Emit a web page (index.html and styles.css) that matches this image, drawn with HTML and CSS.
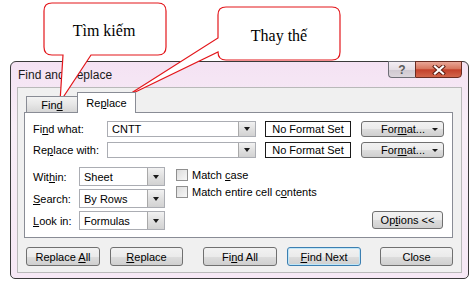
FILE: index.html
```html
<!DOCTYPE html>
<html lang="vi">
  <head>
    <meta charset="UTF-8">
    <title>Find and Replace</title>
    <link rel="stylesheet" href="styles.css">
  </head>
  <body>
    <!-- hộp thoại Find and Replace -->
    <div class="dialog">
      <div class="titlebar">
        <span class="title">Find and Replace</span>
        <div class="caption-buttons">
          <span class="cap-btn help">?</span>
          <span class="cap-btn close">
            <svg width="14" height="10" viewBox="0 0 14 10">
              <path d="M3 1.5 L11 8.5 M11 1.5 L3 8.5" stroke="#5a1a10" stroke-width="4" stroke-linecap="square"/>
              <path d="M3 1.5 L11 8.5 M11 1.5 L3 8.5" stroke="#ffffff" stroke-width="2.2" stroke-linecap="square"/>
            </svg>
          </span>
        </div>
      </div>

      <div class="client">
        <div class="tabs">
          <div class="tab"><span>Fin<u>d</u></span></div>
          <div class="tab active"><span>Re<u>p</u>lace</span></div>
        </div>

        <div class="panel">
          <div class="field-row">
            <span class="label">Fi<u>n</u>d what:</span>
            <div class="combo wide"><span class="combo-text">CNTT</span><span class="drop"><i class="tri"></i></span></div>
            <div class="format-box">No Format Set</div>
            <div class="btn format-btn"><span>For<u>m</u>at...</span><i class="tri small"></i></div>
          </div>
          <div class="field-row">
            <span class="label">Re<u>p</u>lace with:</span>
            <div class="combo wide"><span class="combo-text"></span><span class="drop"><i class="tri"></i></span></div>
            <div class="format-box">No Format Set</div>
            <div class="btn format-btn"><span>For<u>m</u>at...</span><i class="tri small"></i></div>
          </div>

          <div class="options-area">
            <div class="selects">
              <div class="sel-row">
                <span class="small-label">Wit<u>h</u>in:</span>
                <div class="combo narrow"><span class="combo-text">Sheet</span><span class="drop"><i class="tri"></i></span></div>
              </div>
              <div class="sel-row">
                <span class="small-label"><u>S</u>earch:</span>
                <div class="combo narrow"><span class="combo-text">By Rows</span><span class="drop"><i class="tri"></i></span></div>
              </div>
              <div class="sel-row">
                <span class="small-label"><u>L</u>ook in:</span>
                <div class="combo narrow"><span class="combo-text">Formulas</span><span class="drop"><i class="tri"></i></span></div>
              </div>
            </div>
            <div class="checks">
              <div class="check-row"><span class="box"></span><span>Match <u>c</u>ase</span></div>
              <div class="check-row"><span class="box"></span><span>Match entire cell c<u>o</u>ntents</span></div>
            </div>
            <div class="btn options-btn"><span>Op<u>t</u>ions &lt;&lt;</span></div>
          </div>
        </div>

        <div class="actions">
          <div class="btn action w74"><span>Replace <u>A</u>ll</span></div>
          <div class="btn action w73 gap10"><span><u>R</u>eplace</span></div>
          <div class="btn action w74 gap20"><span>Fi<u>n</u>d All</span></div>
          <div class="btn action w74 gap10 default"><span><u>F</u>ind Next</span></div>
          <div class="btn action w73 gap19"><span>Close</span></div>
        </div>
      </div>
    </div>

    <!-- hai khung chú thích màu đỏ nằm đè lên hộp thoại -->
    <svg class="callouts" width="473" height="284" viewBox="0 0 473 284">
      <path class="callout" d="M52 3 H158 Q166 3 166 11 V47 Q166 55 158 55 H91 L60 102 L63 55 H52 Q44 55 44 47 V11 Q44 3 52 3 Z"/>
      <path class="callout" d="M226 7 H332 Q340 7 340 15 V52 Q340 60 332 60 H226 Q218 60 218 52 L125 97 L218 38 V15 Q218 7 226 7 Z"/>
      <text class="callout-text" x="104" y="36" text-anchor="middle">Tìm kiếm</text>
      <text class="callout-text" x="279" y="41" text-anchor="middle">Thay thế</text>
    </svg>
  </body>
</html>
```

FILE: styles.css
```css
body {
  margin: 0;
  background: #ffffff;
  font-family: 'Liberation Sans', Arial, sans-serif;
  font-size: 11px;
  color: #000;
  position: relative;
  overflow: hidden;
  width: 473px;
  height: 284px;
}

u {
  text-decoration: underline;
  text-underline-offset: 1px;
}

/* khung ngoài của hộp thoại */
.dialog {
  margin: 61px 0 0 10px;
  width: 459px;
  height: 218px;
  box-sizing: border-box;
  border: 1px solid #3a3a3a;
  border-radius: 6px 6px 5px 5px;
  background: linear-gradient(#f4e2f3, #f8eef7 30%, #f6e8f5);
  display: flex;
  flex-direction: column;
}

.titlebar {
  height: 25px;
  display: flex;
  align-items: center;
  flex-shrink: 0;
}

.title {
  padding-left: 7px;
  font-size: 12px;
  color: #1a1a1a;
}

.caption-buttons {
  margin-left: auto;
  margin-right: 6px;
  align-self: flex-start;
  margin-top: -1px;
  display: flex;
}

.cap-btn {
  height: 17px;
  box-sizing: border-box;
  display: flex;
  align-items: center;
  justify-content: center;
}

.help {
  width: 27px;
  border: 1px solid #6e6e76;
  border-right: none;
  border-radius: 0 0 0 4px;
  background: linear-gradient(#f4eef4, #e4dde4 50%, #cfc8d0 51%, #dcd6dc);
  color: #5a5a5a;
  font-weight: bold;
  font-size: 12px;
}

.close {
  width: 47px;
  border: 1px solid #6a2c22;
  border-radius: 0 0 4px 0;
  background: linear-gradient(#e9a697, #d8775f 45%, #c3402a 52%, #d2654b);
}

/* vùng làm việc màu xám */
.client {
  margin: 0 6px;
  height: 186px;
  box-sizing: border-box;
  border: 1px solid #b9b9b9;
  background: #f0f0f0;
  padding: 4px 8px 0 6px;
  flex-shrink: 0;
}

.tabs {
  height: 21px;
  display: flex;
  align-items: flex-end;
  padding-left: 2px;
  margin-bottom: -1px;
  position: relative;
  z-index: 1;
}

.tab {
  width: 52px;
  height: 16px;
  margin-bottom: 1px;
  box-sizing: border-box;
  border: 1px solid #898c95;
  border-bottom: none;
  background: linear-gradient(#f3f3f3, #e6e6e6 50%, #d6d6d6);
  display: flex;
  align-items: center;
  justify-content: center;
  padding-top: 1px;
}

.tab.active {
  width: 59px;
  height: 21px;
  margin-bottom: 0;
  margin-left: -1px;
  background: #ffffff;
  padding-top: 0;
}

.panel {
  height: 126px;
  box-sizing: border-box;
  border: 1px solid #898c95;
  background: #ffffff;
  padding: 8px 0 0 8px;
}

.field-row {
  display: flex;
  align-items: center;
  height: 16px;
  margin-bottom: 5px;
}

.label {
  width: 74px;
  flex-shrink: 0;
}

.combo {
  height: 16px;
  box-sizing: border-box;
  border: 1px solid #abadb3;
  background: #ffffff;
  display: flex;
  align-items: center;
}

.combo.wide {
  width: 149px;
}

.combo.narrow {
  width: 86px;
  height: 19px;
}

.combo-text {
  flex: 1;
  padding-left: 4px;
}

.drop {
  width: 17px;
  height: 100%;
  box-sizing: border-box;
  border-left: 1px solid #a9a9a9;
  background: linear-gradient(#f2f2f2, #e0e0e0 50%, #d2d2d2);
  display: flex;
  align-items: center;
  justify-content: center;
}

.tri {
  width: 0;
  height: 0;
  border-left: 3.5px solid transparent;
  border-right: 3.5px solid transparent;
  border-top: 4px solid #1a1a1a;
}

.tri.small {
  border-left-width: 3px;
  border-right-width: 3px;
  border-top-width: 3px;
  margin-left: auto;
}

.format-box {
  margin-left: 9px;
  width: 86px;
  height: 16px;
  box-sizing: border-box;
  border: 1px solid #1a1a1a;
  display: flex;
  align-items: center;
  justify-content: center;
}

.btn {
  box-sizing: border-box;
  border: 1px solid #707070;
  border-radius: 3px;
  background: linear-gradient(#f2f2f2, #ebebeb 50%, #dddddd 51%, #cfcfcf);
  display: flex;
  align-items: center;
  justify-content: center;
}

.format-btn {
  margin-left: 10px;
  width: 83px;
  height: 16px;
  justify-content: flex-start;
  padding: 0 5px 0 19px;
}

/* lề trên 9px (lề dưới 5px của hàng trên bị gộp) */
.options-area {
  margin-top: 9px;
  display: flex;
  align-items: flex-start;
  height: 63px;
}

.selects {
  display: flex;
  flex-direction: column;
  gap: 3px;
}

.sel-row {
  display: flex;
  align-items: center;
}

.small-label {
  width: 46px;
}

.checks {
  margin-left: 11px;
  display: flex;
  flex-direction: column;
  gap: 1px;
}

.check-row {
  height: 16px;
  display: flex;
  align-items: center;
}

.box {
  width: 12px;
  height: 12px;
  box-sizing: border-box;
  border: 1px solid #8f8f8f;
  background: linear-gradient(135deg, #dcdcdc, #f7f7f7);
  margin-right: 4px;
}

.options-btn {
  margin-left: auto;
  margin-right: 9px;
  align-self: flex-end;
  margin-bottom: 1px;
  width: 71px;
  height: 18px;
}

.actions {
  margin-top: 9px;
  display: flex;
  padding-left: 2px;
}

.action {
  height: 19px;
}

.w74 { width: 74px; }
.w73 { width: 73px; }
.gap10 { margin-left: 10px; }
.gap19 { margin-left: 19px; }
.gap20 { margin-left: 20px; }

.action.default {
  border-color: #3c7fb1;
  box-shadow: inset 0 0 0 1px #bfe6f8;
}

/* chú thích */
.callouts {
  position: absolute;
  top: 0;
  left: 0;
  pointer-events: none;
}

.callout {
  fill: #ffffff;
  stroke: #e3161b;
  stroke-width: 1.2;
}

.callout-text {
  font-family: 'Liberation Serif', 'Times New Roman', serif;
  font-size: 16px;
  fill: #000;
}
```
